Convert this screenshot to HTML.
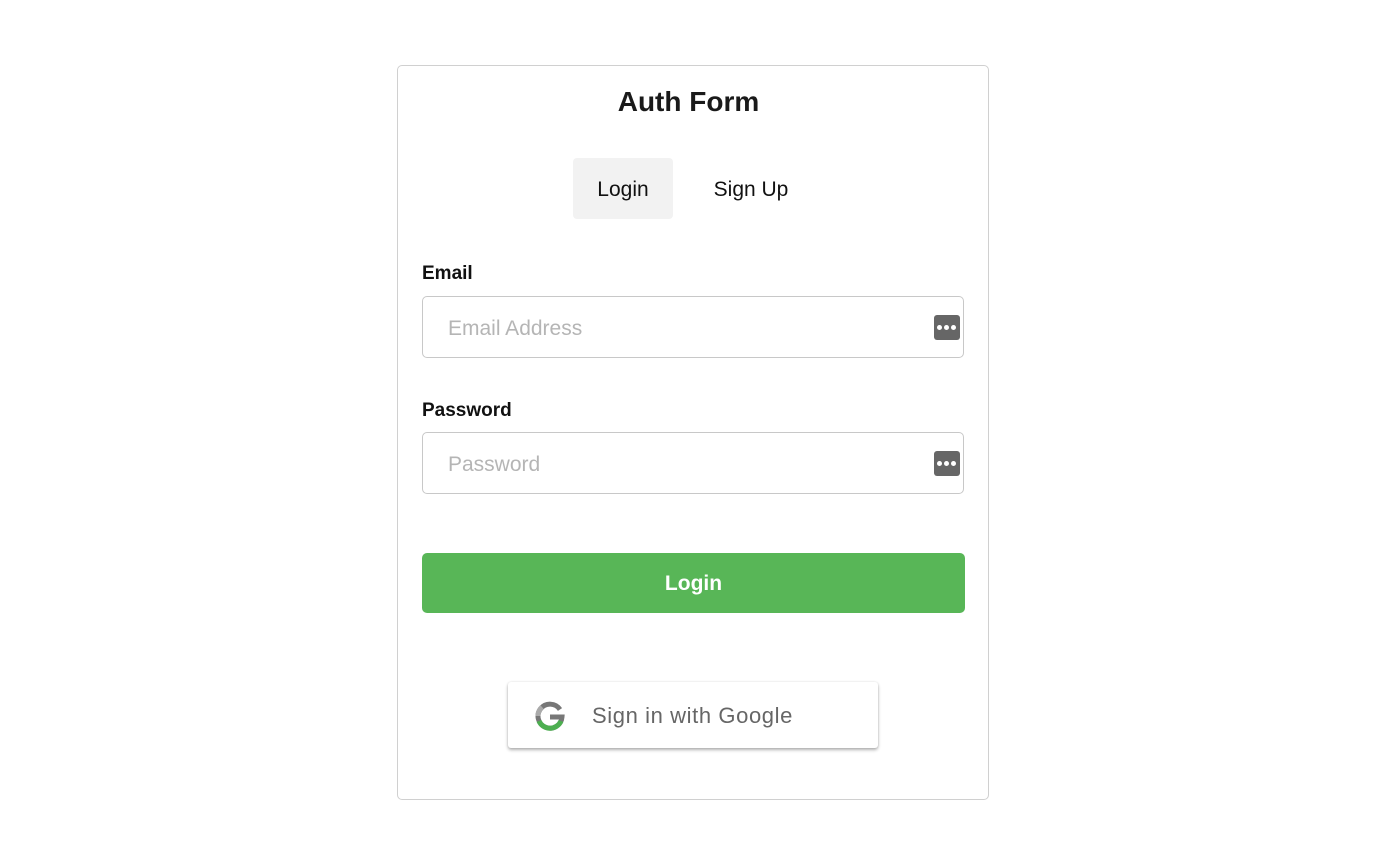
<!DOCTYPE html>
<html><head><style>
body{margin:0;width:1400px;height:847px;background:#fff;font-family:"Liberation Sans",sans-serif;position:relative;overflow:hidden}
.card{position:absolute;left:397px;top:65px;width:590px;height:733px;border:1px solid #d0d0d0;border-radius:5px}
.abs{position:absolute}
h1{position:absolute;left:397px;width:590px;top:86px;margin:0;text-align:center;font-size:28px;font-weight:bold;color:#1a1a1a;text-indent:-7px}
.tab{position:absolute;top:158px;height:61px;line-height:63px;font-size:21px;color:#111;text-align:center}
.lbl{position:absolute;left:422px;font-size:19px;font-weight:bold;color:#111}
.inp{position:absolute;left:422px;width:540px;height:60px;border:1px solid #c8c8c8;border-radius:5px;box-sizing:content-box}
.inp span{position:absolute;left:25px;top:0;line-height:64px;font-size:21px;color:#b5b5b5}
.ic{position:absolute;right:3px;top:18px;width:26px;height:25px;background:#666;border-radius:3px}
.ic i{position:absolute;top:10px;width:5px;height:5px;border-radius:50%;background:#fff}
</style></head><body>
<div class="card"></div>
<h1>Auth Form</h1>
<div class="tab" style="left:573px;width:100px;background:#f2f2f2;border-radius:4px">Login</div>
<div class="tab" style="left:700px;width:102px">Sign Up</div>
<div class="lbl" style="top:263px">Email</div>
<div class="inp" style="top:296px"><span>Email Address</span><div class="ic"><i style="left:3px"></i><i style="left:10px"></i><i style="left:17px"></i></div></div>
<div class="lbl" style="top:400px">Password</div>
<div class="inp" style="top:432px"><span>Password</span><div class="ic"><i style="left:3px"></i><i style="left:10px"></i><i style="left:17px"></i></div></div>
<div class="abs" style="left:422px;top:553px;width:543px;height:60px;background:#58b657;border-radius:5px;color:#fff;font-size:21px;font-weight:bold;text-align:center;line-height:62px">Login</div>
<div class="abs" style="left:508px;top:682px;width:370px;height:66px;background:#fff;border-radius:3px;box-shadow:0 2px 3px rgba(0,0,0,0.3),0 0 2px rgba(0,0,0,0.1)">
<svg class="abs" style="left:26px;top:18px" width="32" height="32" viewBox="0 0 32 32"><path d="M26 9.5A12 12 0 1 0 28 17H16" fill="none" stroke="#777" stroke-width="5"/><path d="M5 21A12 12 0 0 0 27 21" fill="none" stroke="#4caf50" stroke-width="5"/><path d="M4 16A12 12 0 0 1 8 7" fill="none" stroke="#aaa" stroke-width="5"/></svg>
<div class="abs" style="left:84px;top:0;line-height:68px;font-size:22px;letter-spacing:0.6px;color:#666">Sign in with Google</div>
</div>
</body></html>
